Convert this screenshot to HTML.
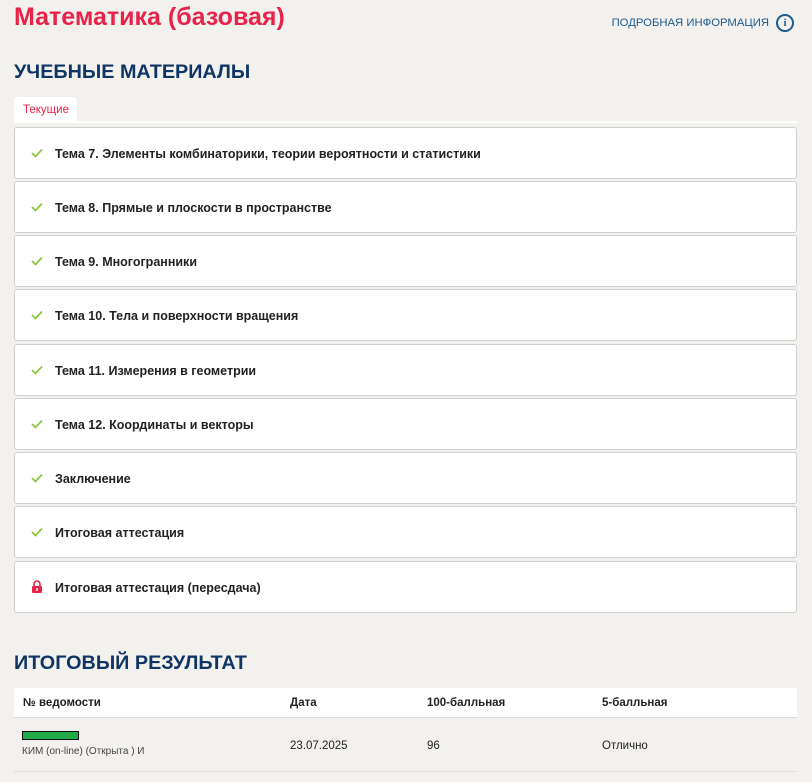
<!DOCTYPE html>
<html><head><meta charset="utf-8"><style>
*{box-sizing:border-box;margin:0;padding:0}
body{width:812px;height:782px;background:#f3f1ee;font-family:"Liberation Sans","DejaVu Sans",sans-serif;position:relative;overflow:hidden;color:#222}
.title{position:absolute;left:14px;top:3px;font-size:25px;font-weight:bold;color:#e8234a}
.info{position:absolute;right:18px;top:14px;font-size:11.3px;color:#1d5a8e;display:flex;align-items:center;gap:7px}
.info .i{width:18px;height:18px;border:2px solid #1d5a8e;border-radius:50%;font-size:11px;font-weight:bold;display:flex;align-items:center;justify-content:center;font-family:"Liberation Serif",serif}
h2{position:absolute;left:14px;font-size:19.8px;font-weight:bold;color:#0f3565}
.tab{position:absolute;left:14px;top:97px;width:63px;height:25px;background:#fff;border-radius:4px 4px 0 0;color:#e8234a;font-size:11.5px;padding:7px 0 0 9px}
.line{position:absolute;left:14px;top:121px;width:783px;height:2px;background:#fff}
.card{position:absolute;left:14px;width:783px;height:52px;background:#fff;border:1px solid #cfcfcf;border-radius:3px;font-size:12.5px;font-weight:600;color:#222;padding:19px 0 0 40px}
.card svg{position:absolute;left:16px;top:20px}
.th{position:absolute;left:14px;top:688px;width:783px;height:30px;background:#fff;border-bottom:1px solid #ddd}
.hl{position:absolute;left:14px;top:771px;width:783px;height:1px;background:#ddd}
.c{position:absolute;font-size:11.5px}
</style></head><body>
<div class="title">Математика (базовая)</div>
<div class="info">ПОДРОБНАЯ ИНФОРМАЦИЯ <span class="i">i</span></div>
<h2 style="top:61px">УЧЕБНЫЕ МАТЕРИАЛЫ</h2>
<div class="tab">Текущие</div>
<div class="line"></div>

<div class="card" style="top:127px"><svg width="12" height="10" viewBox="0 0 12 10"><path d="M1 5l3.5 3.5L11 1.5" fill="none" stroke="#8cc63f" stroke-width="1.8"/></svg>Тема 7. Элементы комбинаторики, теории вероятности и статистики</div>
<div class="card" style="top:181px"><svg width="12" height="10" viewBox="0 0 12 10"><path d="M1 5l3.5 3.5L11 1.5" fill="none" stroke="#8cc63f" stroke-width="1.8"/></svg>Тема 8. Прямые и плоскости в пространстве</div>
<div class="card" style="top:235px"><svg width="12" height="10" viewBox="0 0 12 10"><path d="M1 5l3.5 3.5L11 1.5" fill="none" stroke="#8cc63f" stroke-width="1.8"/></svg>Тема 9. Многогранники</div>
<div class="card" style="top:289px"><svg width="12" height="10" viewBox="0 0 12 10"><path d="M1 5l3.5 3.5L11 1.5" fill="none" stroke="#8cc63f" stroke-width="1.8"/></svg>Тема 10. Тела и поверхности вращения</div>
<div class="card" style="top:344px"><svg width="12" height="10" viewBox="0 0 12 10"><path d="M1 5l3.5 3.5L11 1.5" fill="none" stroke="#8cc63f" stroke-width="1.8"/></svg>Тема 11. Измерения в геометрии</div>
<div class="card" style="top:398px"><svg width="12" height="10" viewBox="0 0 12 10"><path d="M1 5l3.5 3.5L11 1.5" fill="none" stroke="#8cc63f" stroke-width="1.8"/></svg>Тема 12. Координаты и векторы</div>
<div class="card" style="top:452px"><svg width="12" height="10" viewBox="0 0 12 10"><path d="M1 5l3.5 3.5L11 1.5" fill="none" stroke="#8cc63f" stroke-width="1.8"/></svg>Заключение</div>
<div class="card" style="top:506px"><svg width="12" height="10" viewBox="0 0 12 10"><path d="M1 5l3.5 3.5L11 1.5" fill="none" stroke="#8cc63f" stroke-width="1.8"/></svg>Итоговая аттестация</div>
<div class="card" style="top:561px"><svg width="12" height="13" viewBox="0 0 12 13" style="top:18px"><path d="M3 6V4a3 3 0 0 1 6 0v2" fill="none" stroke="#e8234a" stroke-width="1.6"/><rect x="1" y="6" width="10" height="7" rx="1" fill="#e8234a"/><rect x="5.3" y="8" width="1.4" height="3" fill="#fff"/></svg>Итоговая аттестация (пересдача)</div>

<h2 style="top:652px">ИТОГОВЫЙ РЕЗУЛЬТАТ</h2>
<div class="th"></div>
<div class="c" style="left:23px;top:697px;font-weight:bold">№ ведомости</div>
<div class="c" style="left:290px;top:697px;font-weight:bold">Дата</div>
<div class="c" style="left:427px;top:697px;font-weight:bold">100-балльная</div>
<div class="c" style="left:602px;top:697px;font-weight:bold">5-балльная</div>
<div style="position:absolute;left:22px;top:731px;width:57px;height:9px;background:#22aa4a;border:1px solid #111"></div>
<div class="c" style="left:22px;top:746px;font-size:10px;color:#444">КИМ (on-line) (Открыта ) И</div>
<div class="c" style="left:290px;top:740px">23.07.2025</div>
<div class="c" style="left:427px;top:740px">96</div>
<div class="c" style="left:602px;top:740px">Отлично</div>
<div class="hl"></div>
</body></html>
